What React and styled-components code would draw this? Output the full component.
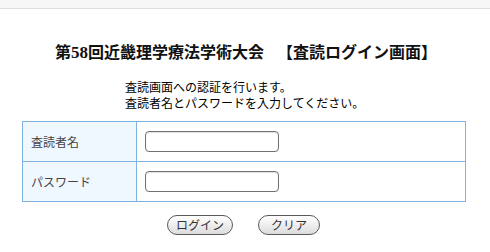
import React from 'react';
import styled, { createGlobalStyle } from 'styled-components';

const GlobalStyle = createGlobalStyle`
  body {
    margin: 0;
    background: #ffffff;
    font-family: "Noto Sans CJK JP", "Liberation Serif", serif;
    color: #111;
  }
`

const TopBar = styled.div`
  height: 8px;
  background: #f7f7f7;
  border-bottom: 1px solid #dedede;
`

const Title = styled.h1`
  margin: 32px 0 0;
  padding-left: 2px;
  display: flex;
  justify-content: center;
  gap: 13px;
  font-size: 16px;
  line-height: 20px;
  font-weight: 700;
  color: #111;
`

const Num = styled.span`
  font-family: "Liberation Serif", "Times New Roman", serif;
  font-size: 17px;
`

const Intro = styled.div`
  margin: 16px auto 0;
  width: 240px;
  font-size: 12px;
  line-height: 16px;
  color: #000;
`

const FormTable = styled.div`
  margin: 10px 0 0 22px;
  width: 442px;
  border: 1px solid #80b3e3;
`

const Row = styled.div`
  display: grid;
  grid-template-columns: 114px 1fr;
  height: 39px;
  & + & {
    border-top: 1px solid #80b3e3;
  }
`

const Label = styled.div`
  display: flex;
  align-items: center;
  padding-left: 8px;
  background: #f0f8ff;
  border-right: 1px solid #80b3e3;
  font-size: 12px;
  color: #444;
`

const Field = styled.div`
  display: flex;
  align-items: center;
  padding-left: 8px;
`

const TextInput = styled.input`
  box-sizing: border-box;
  width: 134px;
  height: 21px;
  border: 1px solid #707070;
  border-radius: 4px;
  background: #fff;
  box-shadow: inset 0 1px 1px rgba(0, 0, 0, 0.12);
  outline: none;
`

const Buttons = styled.div`
  margin-top: 13px;
  display: flex;
  justify-content: center;
  gap: 25px;
  padding-right: 3px;
`

const PillButton = styled.button`
  box-sizing: border-box;
  width: ${p => p.$w}px;
  height: 20px;
  padding: 0;
  border: 1px solid #5a5a5a;
  border-radius: 10px;
  background: linear-gradient(#ffffff, #dcdcdc);
  font-family: "Noto Sans CJK JP", sans-serif;
  font-size: 12px;
  line-height: 18px;
  color: #333;
  cursor: pointer;
`

export default function App() {
  return (
    <>
      <GlobalStyle />
      <TopBar />
      <Title>
        <span>第<Num>58</Num>回近畿理学療法学術大会</span>
        <span>【査読ログイン画面】</span>
      </Title>
      <Intro>
        査読画面への認証を行います。<br />
        査読者名とパスワードを入力してください。
      </Intro>
      <FormTable>
        <Row>
          <Label>査読者名</Label>
          <Field><TextInput type="text" /></Field>
        </Row>
        <Row>
          <Label>パスワード</Label>
          <Field><TextInput type="password" /></Field>
        </Row>
      </FormTable>
      <Buttons>
        <PillButton $w={66}>ログイン</PillButton>
        <PillButton $w={62}>クリア</PillButton>
      </Buttons>
    </>
  );
}
